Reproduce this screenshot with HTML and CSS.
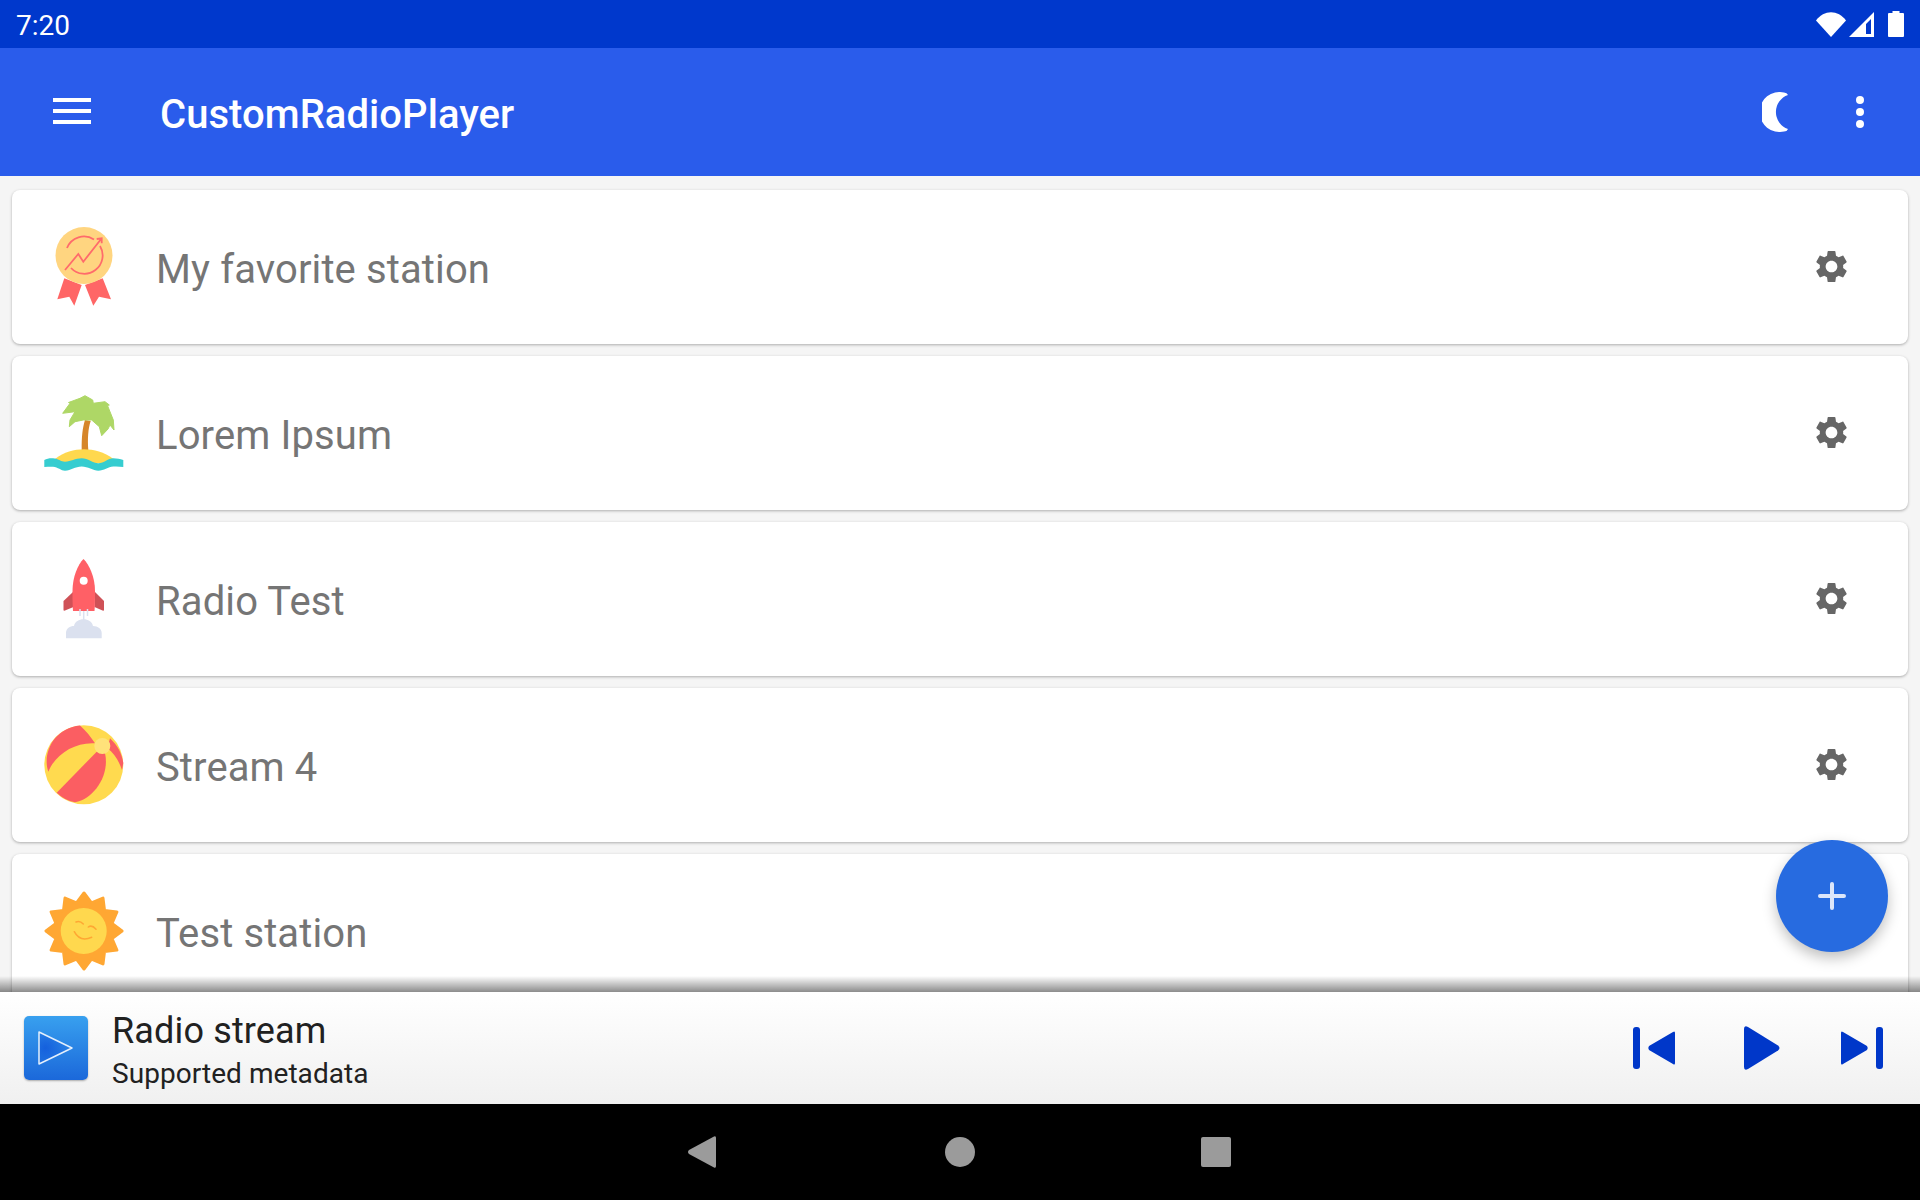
FILE: index.html
```html
<!DOCTYPE html>
<html>
	<head>
		<title>CustomRadioPlayer</title>
		<link rel="stylesheet" href="styles.css">
	</head>
	<body>
		<div class="status-bar">
			<span class="clock">7:20</span>
			<div class="status-icons">
				<svg class="icon-wifi" viewBox="0 0 30 25"><path d="M0 8.500 C8 -2.500 22 -2.500 30 8.500 L15 25 Z" fill="#fff"/></svg>
				<svg class="icon-signal" viewBox="0 0 25 25"><path fill-rule="evenodd" d="M0 25 L25 0 L25 25 Z M17 12 L17 22 L22 22 L22 7 Z" fill="#fff"/></svg>
				<svg class="icon-battery" viewBox="0 0 16 26"><path d="M4.500 0 H11.500 V2 H15 Q16 2 16 3 V25 Q16 26 15 26 H1 Q0 26 0 25 V3 Q0 2 1 2 H4.500 Z" fill="#fff"/></svg>
			</div>
		</div>

		<header class="app-bar">
			<div class="menu-icon"><span></span><span></span><span></span></div>
			<h1 class="app-title">CustomRadioPlayer</h1>
			<svg class="icon-moon" viewBox="0 0 26 40"><path d="M22 .5 Q25 .5 26 3 A18 18 0 0 0 26 37 Q25 39.500 22 39.500 A20 20 0 1 1 22 .5 Z" fill="#fff"/></svg>
			<svg class="icon-more" viewBox="0 0 8 32"><circle cx="4" cy="4" r="4" fill="#fff"/><circle cx="4" cy="16" r="4" fill="#fff"/><circle cx="4" cy="28" r="4" fill="#fff"/></svg>
		</header>

		<main class="content">
			<div class="station-list">
				<div class="station">
					<svg class="station-icon" viewBox="0 0 80 80">
						<path d="M20.300 51.300 L37.700 58 L30.300 78.700 L25.300 69.700 L13.300 72.300 Z" fill="#ff6666"/>
						<path d="M41 58 L58.700 51.300 L67 72.300 L55 69.700 L49.300 78.700 Z" fill="#ff6666"/>
						<circle cx="40" cy="28.500" r="28.500" fill="#ffd580"/>
						<path d="M50 12.500 A18.300 18.300 0 0 0 23 21 M27 41 A18.300 18.300 0 0 0 56 19" fill="none" stroke="#ff6b6b" stroke-width="1.800"/>
						<path d="M21 43 L34.300 27 L39.300 34.700 L57.700 11.300 M52.700 12 L57.700 11.300 L57.700 16.300" fill="none" stroke="#ff6b6b" stroke-width="1.800"/>
					</svg>
					<span class="station-name">My favorite station</span>
					<svg class="gear" viewBox="0 0 24 24"><use href="#gear-path"/></svg>
				</div>
				<div class="station">
					<svg class="station-icon" viewBox="0 0 80 80">
						<path d="M37.700 57 C37.500 44 38.500 35 41 27 L46.700 28 C44 36 43.500 46 44.300 57 Z" fill="#d6862a"/>
						<path d="M18.700 20.300 L26 10.300 L24.500 9.500 L36 5.300 L41 2.700 L48.700 7 L49.300 10.300 L61 8.700 L65.300 12 L63.500 12.500 L69.300 27 L70 37 L66 32 L64 36 L57.700 42.700 L55.300 33.700 L47.700 27 L39.300 27 L31 28.700 L25.300 33.700 L26 27 L31 18.700 Z" fill="#aed766" stroke="#aed766" stroke-linejoin="round"/>
						<path d="M11 66 C20 59 30 56.300 40 56.300 C50 56.300 60 59 69.500 66 L69.500 70 L11 70 Z" fill="#ffd84e"/>
						<path d="M.3 67 C3 65.500 6 65 9 65.300 C14 65.500 17 68.700 21 68.700 C27 68.700 31 65.300 37.700 65.300 C44 65.300 49 70.300 54.300 70.300 C60 70.300 64 65.300 69.300 65.300 C73 65.300 76 66 79.300 67 L79.300 74 C76 73.500 73 73.300 69.300 73.500 C64 74 60 77.700 54.300 77.700 C49 77.700 44 73.500 37.700 73.500 C31 73.500 27 77.700 21 77.700 C17 77.700 14 74 9 73.700 C6 73.600 3 73.800 .3 74 Z" fill="#36cdd0"/>
					</svg>
					<span class="station-name">Lorem Ipsum</span>
					<svg class="gear" viewBox="0 0 24 24"><use href="#gear-path"/></svg>
				</div>
				<div class="station">
					<svg class="station-icon" viewBox="0 0 80 80">
						<path d="M29 33 L19.500 42 V51 Q19.500 52 21 51.500 L29.500 48 Z" fill="#cf5157"/>
						<path d="M51 33 L60 42 V51 Q60 52 58.500 51.500 L50.500 48 Z" fill="#cf5157"/>
						<path d="M39.500 0 C45 5 51 18 51 32 C51 40 51 46 50.500 52 H29 C28.500 46 28.500 40 28.500 32 C28.500 18 34 5 39.500 0 Z" fill="#ff6066"/>
						<circle cx="39.700" cy="21.700" r="4" fill="#fff"/>
						<path d="M36 50 V57 M39.700 52 V63 M43.500 50 V57" stroke="#dbe1ef" stroke-width="1.500" fill="none"/>
						<path d="M22 79.300 V74 C22 69.500 26 67 30 67 C31 62.500 35 60.300 39.500 60.300 C44 60.300 48 62.500 49 67 C54 67 57.700 70 57.700 74 V79.300 Z" fill="#dbe1ef"/>
					</svg>
					<span class="station-name">Radio Test</span>
					<svg class="gear" viewBox="0 0 24 24"><use href="#gear-path"/></svg>
				</div>
				<div class="station">
					<svg class="station-icon" viewBox="0 0 80 80">
						<circle cx="39.800" cy="39.800" r="39.500" fill="#ffda4f"/>
						<path d="M36 .5 C42 6 47 12 51 18.300 C30 17 11 30 4.300 46.700 C-2 28 10 3 36 .5 Z" fill="#fb5e62"/>
						<path d="M52.700 26.700 L12.700 67.700 C18 73 24 76 31 77.300 C50 74 66 50 61 28.300 Z" fill="#fb5e62"/>
						<path d="M66 13.300 C74 21 78 29 79.300 38 L78 45 C75 36 70 28 63.300 23.300 Z" fill="#fb5e62"/>
						<circle cx="58.300" cy="21" r="8" fill="#ffe27a"/>
					</svg>
					<span class="station-name">Stream 4</span>
					<svg class="gear" viewBox="0 0 24 24"><use href="#gear-path"/></svg>
				</div>
				<div class="station">
					<svg class="station-icon" viewBox="0 0 80 80">
						<polygon points="40,2 47.500,12 59,7.100 60.500,19.500 72.900,21 68,32.500 78,40 68,47.500 72.900,59 60.500,60.500 59,72.900 47.500,68 40,78 32.500,68 21,72.900 19.500,60.500 7.100,59 12,47.500 2,40 12,32.500 7.100,21 19.500,19.500 21,7.100 32.500,12" fill="#ffa733" stroke="#ffa733" stroke-width="3" stroke-linejoin="round"/>
						<circle cx="39.700" cy="40" r="23" fill="#ffd84e"/>
						<path d="M32 31 Q36 29.500 39.300 33 M44.300 36 Q48 33.500 52 38.300 M30.300 40.700 Q36 51.500 47.700 46.300" fill="none" stroke="#ffa733" stroke-width="1.500" stroke-linecap="round"/>
					</svg>
					<span class="station-name">Test station</span>
					<svg class="gear" viewBox="0 0 24 24"><use href="#gear-path"/></svg>
				</div>
			</div>
			<div class="fab">
				<svg viewBox="0 0 28 28"><path d="M14 2 V26 M2 14 H26" stroke="#dce6fa" stroke-width="4" stroke-linecap="round" fill="none"/></svg>
			</div>
		</main>

		<footer class="player">
			<div class="cover">
				<svg viewBox="0 0 64 64">
					<defs><radialGradient id="cover-glow" cx="0.2" cy="0.5" r="0.8"><stop offset="0" stop-color="#1560dd"/><stop offset="1" stop-color="#1560dd" stop-opacity="0"/></radialGradient></defs>
					<path d="M15 16 L48 32 L15 48 Z" fill="url(#cover-glow)" stroke="#e4effc" stroke-width="1.500" stroke-linejoin="round"/>
				</svg>
			</div>
			<div class="track">
				<div class="track-title">Radio stream</div>
				<div class="track-meta">Supported metadata</div>
			</div>
			<svg class="ctl ctl-prev" viewBox="0 0 42 42"><rect x="0" y="0" width="7" height="42" rx="3" fill="#0037c9"/><path d="M40 5 Q42 3.500 42 6 V36 Q42 38.500 40 37 L16 23 Q14.500 21 16 19 Z" fill="#0037c9"/></svg>
			<svg class="ctl ctl-play" viewBox="0 0 36 44"><path d="M0 3 Q0 -1 4 1 L34 19.500 Q37 22 34 24.500 L4 43 Q0 45 0 41 Z" fill="#0037c9"/></svg>
			<svg class="ctl ctl-next" viewBox="0 0 42 42"><path d="M2 5 Q0 3.500 0 6 V36 Q0 38.500 2 37 L26 23 Q27.500 21 26 19 Z" fill="#0037c9"/><rect x="35" y="0" width="7" height="42" rx="3" fill="#0037c9"/></svg>
		</footer>

		<nav class="nav-bar">
			<svg class="nav-back" viewBox="0 0 28 32"><path d="M26 .5 Q28 -.5 28 2 V30 Q28 32.500 26 31.500 L1 18 Q-1 16 1 14 Z" fill="#9b9b9b"/></svg>
			<div class="nav-home"></div>
			<div class="nav-recent"></div>
		</nav>

		<svg class="defs" width="0" height="0">
			<defs>
				<path id="gear-path" fill="#666" d="M19.140 12.940c.04-.3.06-.61.06-.94 0-.32-.02-.64-.07-.94l2.030-1.580c.18-.14.23-.41.12-.61l-1.920-3.320c-.12-.22-.37-.29-.59-.22l-2.390.96c-.5-.38-1.030-.7-1.620-.94l-.36-2.540c-.04-.24-.24-.41-.48-.41h-3.840c-.24 0-.43.17-.47.41l-.36 2.540c-.59.24-1.130.57-1.620.94l-2.390-.96c-.22-.08-.47 0-.59.22L2.740 8.870c-.12.21-.08.47.12.61l2.030 1.580c-.05.3-.09.63-.09.94s.02.64.07.94l-2.030 1.580c-.18.14-.23.41-.12.61l1.920 3.320c.12.22.37.29.59.22l2.390-.96c.5.38 1.030.7 1.620.94l.36 2.540c.05.24.24.41.48.41h3.840c.24 0 .44-.17.47-.41l.36-2.540c.59-.24 1.130-.56 1.620-.94l2.390.96c.22.08.47 0 .59-.22l1.920-3.320c.12-.22.07-.47-.12-.61l-2.010-1.580zM12 15.600c-1.980 0-3.600-1.620-3.600-3.600s1.620-3.600 3.600-3.600 3.600 1.620 3.600 3.600-1.620 3.600-3.600 3.600z"/>
			</defs>
		</svg>
	</body>
</html>
```

FILE: styles.css
```css
html, body {
	height: 100%;
}
body {
	margin: 0;
	display: flex;
	flex-direction: column;
	overflow: hidden;
	font-family: Roboto, "Liberation Sans", sans-serif;
	background: #f5f5f5;
}

.status-bar {
	height: 48px;
	flex: none;
	display: flex;
	align-items: center;
	justify-content: space-between;
	padding: 0 16px 0 16px;
	background: #0038cc;
	color: #fff;
}
.clock {
	font-size: 28px;
	margin-top: 2px;
}
.status-icons {
	display: flex;
	align-items: center;
}
.status-icons svg {
	display: block;
}
.icon-wifi {
	width: 30px;
	height: 25px;
	margin-right: 3px;
}
.icon-signal {
	width: 25px;
	height: 25px;
	margin-right: 14px;
}
.icon-battery {
	width: 16px;
	height: 26px;
}

.app-bar {
	height: 128px;
	flex: none;
	display: flex;
	align-items: center;
	padding: 0 56px 0 53px;
	background: #2a5ceb;
	color: #fff;
	position: relative;
}
.menu-icon {
	width: 38px;
	display: flex;
	flex-direction: column;
	gap: 7px;
	margin-right: 69px;
	margin-bottom: 2px;
}
.menu-icon span {
	height: 4px;
	background: #fff;
}
.app-title {
	flex: 1;
	margin: 0;
	padding-top: 5px;
	font-size: 40px;
	font-weight: 500;
	letter-spacing: 0.05px;
}
.icon-moon {
	width: 26px;
	height: 40px;
	margin-right: 68px;
}
.icon-more {
	width: 8px;
	height: 32px;
}

.content {
	flex: 1;
	min-height: 0;
	position: relative;
	overflow: hidden;
}
.content::after {
	content: "";
	position: absolute;
	left: 0;
	right: 0;
	bottom: 0;
	height: 16px;
	background: linear-gradient(rgba(0, 0, 0, 0), rgba(0, 0, 0, 0.45));
}
.station-list {
	display: flex;
	flex-direction: column;
	gap: 12px;
	padding: 14px 12px;
}
.station {
	height: 154px;
	flex: none;
	display: flex;
	align-items: center;
	padding: 0 57px 0 32px;
	background: #fff;
	border-radius: 8px;
	box-shadow: 0 1px 3px rgba(0, 0, 0, 0.3);
}
.station-icon {
	width: 80px;
	height: 80px;
	margin-right: 32px;
	flex: none;
}
.station-name {
	flex: 1;
	padding-top: 5px;
	font-size: 40px;
	letter-spacing: 0.12px;
	color: #757575;
}
.gear {
	width: 39px;
	height: 39px;
	margin-top: -1px;
}

.fab {
	position: absolute;
	right: 32px;
	bottom: 40px;
	width: 112px;
	height: 112px;
	border-radius: 50%;
	background: #276be0;
	box-shadow: 0 6px 14px rgba(0, 0, 0, 0.25);
	display: flex;
	align-items: center;
	justify-content: center;
	z-index: 1;
}
.fab svg {
	width: 28px;
	height: 28px;
}

.player {
	height: 112px;
	flex: none;
	display: flex;
	align-items: center;
	padding: 0 37px 0 24px;
	background: linear-gradient(#fff, #f0f0f0);
}
.cover {
	width: 64px;
	height: 64px;
	border-radius: 5px;
	background: linear-gradient(#38a0ef, #1b68da);
	box-shadow: 0 1px 2px rgba(0, 0, 0, 0.3);
	margin-right: 24px;
}
.cover svg {
	display: block;
}
.track {
	flex: 1;
	padding-top: 3px;
}
.track-title {
	font-size: 36px;
	letter-spacing: 0.15px;
	color: #212121;
}
.track-meta {
	font-size: 28px;
	letter-spacing: 0.05px;
	color: #212121;
	margin-top: 5px;
}
.ctl-prev,
.ctl-next {
	width: 42px;
	height: 42px;
}
.ctl-prev {
	margin-right: 69px;
}
.ctl-play {
	width: 36px;
	height: 44px;
	margin-right: 61px;
}

.nav-bar {
	height: 96px;
	flex: none;
	display: flex;
	align-items: center;
	justify-content: center;
	padding-right: 2px;
	background: #000;
}
.nav-back {
	width: 28px;
	height: 32px;
	margin-right: 229px;
}
.nav-home {
	width: 30px;
	height: 30px;
	border-radius: 50%;
	background: #9b9b9b;
	margin-right: 226px;
}
.nav-recent {
	width: 30px;
	height: 30px;
	border-radius: 2px;
	background: #9b9b9b;
}
.defs {
	position: absolute;
}
```
